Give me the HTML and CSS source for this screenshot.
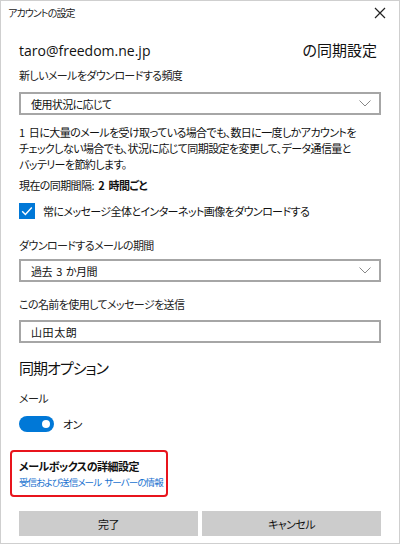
FILE: index.html
```html
<!DOCTYPE html>
<html lang="ja">
<head>
<meta charset="utf-8">
<title>アカウントの設定</title>
<link rel="stylesheet" href="styles.css">
</head>
<body>
<div class="window">
  <div class="titlebar">
    <span class="title">アカウントの設定</span>
    <svg class="close" width="12" height="12" viewBox="0 0 12 12"><path d="M1 1L11 11M11 1L1 11" stroke="#222" stroke-width="1.2" fill="none"/></svg>
  </div>
  <div class="content">
    <div class="heading"><span class="addr">taro@freedom.ne.jp</span><span class="sync">の同期設定</span></div>
    <div class="label first">新しいメールをダウンロードする頻度</div>
    <div class="select s1"><span>使用状況に応じて</span><svg width="12" height="7" viewBox="0 0 12 7"><path d="M0.5 0.5L6 6L11.5 0.5" stroke="#888" stroke-width="1" fill="none"/></svg></div>
    <p class="desc">1 日に大量のメールを受け取っている場合でも、数日に一度しかアカウントを<br>チェックしない場合でも、状況に応じて同期設定を変更して、データ通信量と<br>バッテリーを節約します。</p>
    <div class="current">現在の同期間隔: <b>2 時間ごと</b></div>
    <div class="check"><span class="box"><svg width="16" height="16" viewBox="0 0 16 16"><path d="M3.2 8.2L6.4 11.4L12.8 4.6" stroke="#fff" stroke-width="1.4" fill="none"/></svg></span><span>常にメッセージ全体とインターネット画像をダウンロードする</span></div>
    <div class="label l2">ダウンロードするメールの期間</div>
    <div class="select s2"><span>過去 3 か月間</span><svg width="12" height="7" viewBox="0 0 12 7"><path d="M0.5 0.5L6 6L11.5 0.5" stroke="#888" stroke-width="1" fill="none"/></svg></div>
    <div class="label l3">この名前を使用してメッセージを送信</div>
    <div class="select s3"><span>山田太朗</span></div>
    <div class="section">同期オプション</div>
    <div class="label l4">メール</div>
    <div class="toggle-row"><span class="toggle"><span class="knob"></span></span><span>オン</span></div>
    <div class="advanced">
      <div class="adv-title">メールボックスの詳細設定</div>
      <div class="link">受信および送信メール サーバーの情報</div>
    </div>
    <div class="buttons"><div class="btn">完了</div><div class="btn">キャンセル</div></div>
  </div>
</div>
</body>
</html>
```
FILE: styles.css
```css
* { box-sizing: border-box; }
html, body { margin: 0; padding: 0; background: #fff; }
body {
  font-family: "Noto Sans CJK JP", "Noto Sans", sans-serif;
  font-feature-settings: "palt";
  color: #111;
}
.window {
  width: 400px;
  height: 544px;
  border: 1px solid #cfcfcf;
  background: #fff;
  overflow: hidden;
}
.titlebar {
  height: 24px;
  display: flex;
  align-items: center;
  justify-content: space-between;
  padding: 0 13px 0 7px;
}
.title { font-size: 10px; line-height: 24px; color: #222; letter-spacing: -0.9px; }
.close { display: block; }
.content { padding: 0 18px; }
.heading {
  margin-top: 13px;
  height: 24px;
  line-height: 24px;
  display: flex;
  justify-content: space-between;
  align-items: baseline;
  color: #111;
  padding-right: 4px;
}
.addr { font-family: "Open Sans", "Noto Sans", sans-serif; font-size: 14px; }
.sync { font-size: 15px; }
.label, .desc, .current, .check, .select, .toggle-row, .btn {
  font-size: 11px;
  letter-spacing: -0.6px;
  word-spacing: 2.5px;
}
.label { line-height: 16px; color: #222; }
.label.first { margin-top: 5px; }
.select {
  height: 23px;
  border: 2px solid #a6a6a6;
  display: flex;
  align-items: center;
  justify-content: space-between;
  padding: 0 8px 0 10px;
  color: #111;
}
.select svg { display: block; }
.s1 { margin-top: 9px; }
.desc { margin: 9px 0 0; line-height: 16px; color: #111; white-space: nowrap; }
.current { margin-top: 5px; line-height: 16px; }
.current b { font-weight: 700; }
.check { margin-top: 10px; display: flex; align-items: center; height: 16px; }
.box { width: 16px; height: 16px; background: #0078d7; margin-right: 8px; display: block; }
.box svg { display: block; }
.l2 { margin-top: 18px; }
.s2 { margin-top: 6px; }
.l3 { margin-top: 14px; }
.s3 { margin-top: 8px; letter-spacing: 0.6px; }
.section { margin-top: 14px; font-size: 15px; letter-spacing: -1px; line-height: 22px; color: #111; }
.l4 { margin-top: 11px; }
.toggle-row { margin-top: 10px; display: flex; align-items: center; height: 16px; }
.toggle {
  width: 35px; height: 16px; border-radius: 8px; background: #0078d7;
  display: flex; align-items: center; justify-content: flex-end; padding-right: 4px;
  margin-right: 9px;
}
.knob { width: 8px; height: 8px; border-radius: 50%; background: #fff; display: block; }
.advanced {
  margin-top: 18px;
  margin-left: -9px;
  width: 158px;
  border: 2px solid #e8141c;
  border-radius: 4px;
  padding: 6px 0 6px 7px;
}
.adv-title { font-size: 11px; letter-spacing: -0.5px; line-height: 16px; font-weight: 700; color: #111; }
.link { margin-top: 1px; font-size: 9.5px; letter-spacing: -0.9px; word-spacing: 2px; line-height: 14px; color: #1a73d0; white-space: nowrap; }
.buttons { margin-top: 14px; display: flex; gap: 4px; }
.btn {
  flex: 1; height: 25px; background: #cccccc;
  display: flex; align-items: center; justify-content: center;
  color: #111;
}
```
